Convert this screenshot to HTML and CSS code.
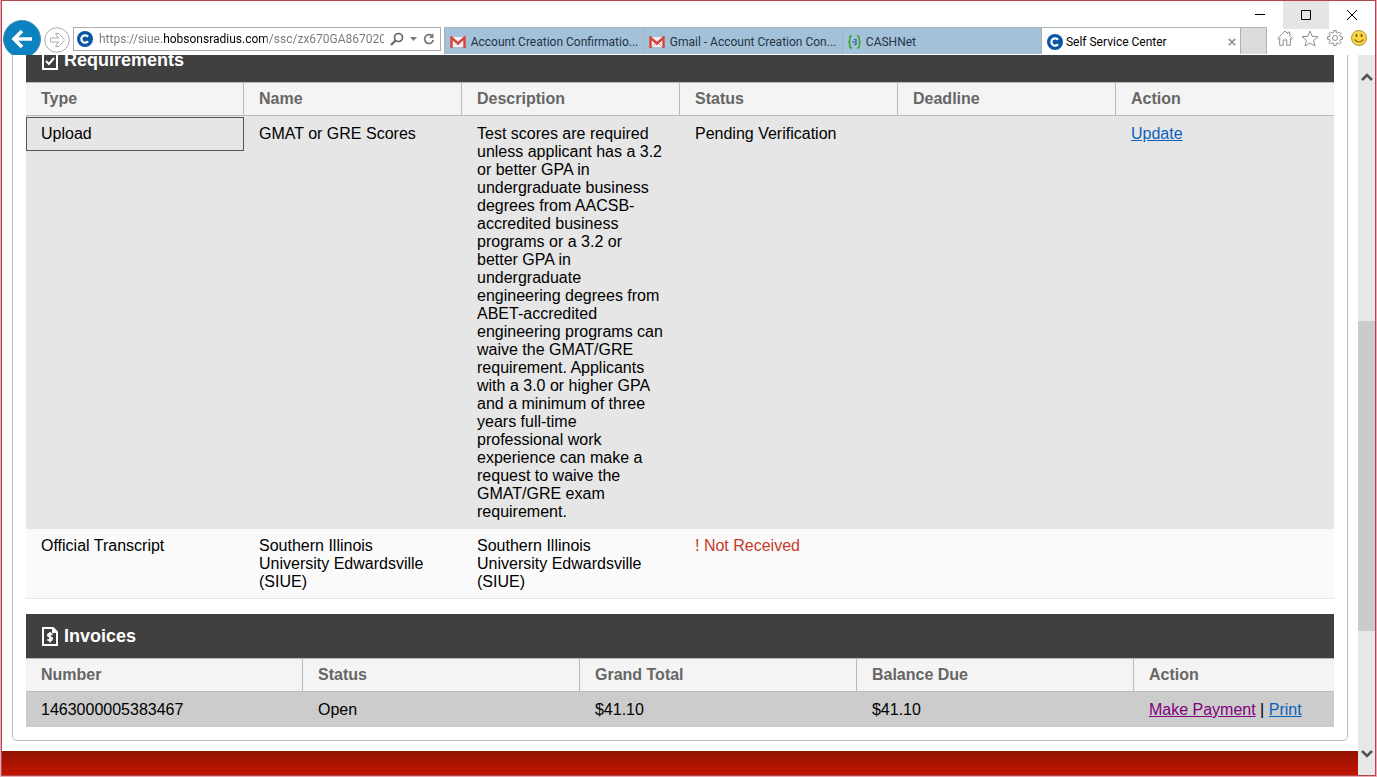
FILE: index.html
```html
<!DOCTYPE html>
<html lang="en">
<head>
<meta charset="utf-8">
<title>Self Service Center</title>
<link rel="stylesheet" href="styles.css">
</head>
<body>
<div class="window">
  <header class="chrome">
    <div class="titlebar">
      <button class="win-btn" aria-label="Minimize"><svg width="12" height="12" viewBox="0 0 12 12"><path d="M1 5.500h10" stroke="#000"/></svg></button>
      <button class="win-btn hovered" aria-label="Maximize"><svg width="12" height="12" viewBox="0 0 12 12"><path d="M1.500 1.500h9v9h-9z" fill="none" stroke="#000"/></svg></button>
      <button class="win-btn" aria-label="Close"><svg width="12" height="12" viewBox="0 0 12 12"><path d="M1 1l10 10M11 1L1 11" stroke="#000"/></svg></button>
    </div>
    <div class="toolbar">
      <button class="back" aria-label="Back"><svg width="24" height="22" viewBox="0 0 24 22"><path d="M22 11H4M12 3L4 11l8 8" fill="none" stroke="#fff" stroke-width="3.600"/></svg></button>
      <button class="forward" aria-label="Forward"><svg width="26" height="26" viewBox="0 0 26 26"><circle cx="13" cy="13" r="12.300" fill="#fff" stroke="#aaa"/><path d="M6.500 11h8l-3-4.500h3.500L20.500 13 15 19.500h-3.500l3-4.500h-8z" fill="#fff" stroke="#aaa"/></svg></button>
      <div class="address">
        <svg width="16" height="16" viewBox="0 0 16 16"><circle cx="8" cy="8" r="8" fill="#0b56a4"/><path d="M11 5.700A3.700 3.700 0 1 0 11 10.300" fill="none" stroke="#fff" stroke-width="2.200"/></svg>
        <input class="url" type="text" aria-label="Address" value="https://siue.hobsonsradius.com/ssc/zx670GA867020x67">
        <button class="bare" aria-label="Search"><svg width="14" height="14" viewBox="0 0 14 14"><circle cx="8.500" cy="5.500" r="4" fill="none" stroke="#666" stroke-width="1.700"/><path d="M5.500 8.500L1 13" stroke="#666" stroke-width="2.300"/></svg></button>
        <button class="bare" aria-label="Show history"><svg width="7" height="4" viewBox="0 0 7 4"><path d="M0 0h7L3.500 4z" fill="#777"/></svg></button>
        <button class="bare" aria-label="Refresh"><svg width="12" height="14" viewBox="0 0 12 14"><path d="M9 3.800A4.400 4.400 0 1 0 10.300 8" fill="none" stroke="#777" stroke-width="1.800"/><path d="M10.500 1v5H6z" fill="#777"/></svg></button>
      </div>
      <nav class="tabs">
        <button class="tab"><svg width="16" height="12" viewBox="0 0 16 12"><path d="M1 1h14v10H1z" fill="#f6efef"/><path d="M3 11l5-5 5 5" fill="none" stroke="#ddd"/><path d="M1.500 12V1.500L8 7.500l6.500-6V12" fill="none" stroke="#d5453d" stroke-width="2.400"/></svg><span>Account Creation Confirmatio...</span></button>
        <button class="tab"><svg width="16" height="12" viewBox="0 0 16 12"><path d="M1 1h14v10H1z" fill="#f6efef"/><path d="M3 11l5-5 5 5" fill="none" stroke="#e6a5a5"/><path d="M1.500 12V1.500L8 7.500l6.500-6V12" fill="none" stroke="#d5453d" stroke-width="2.400"/></svg><span>Gmail - Account Creation Con...</span></button>
        <button class="tab"><svg width="13" height="14" viewBox="0 0 13 14"><path d="M4 1.200H3Q1.800 1.200 1.800 3v2.500L.8 7l1 1.500V11q0 1.800 1.200 1.800h1M9 1.200h1q1.200 0 1.200 1.800v2.500l1 1.500-1 1.500V11q0 1.800-1.200 1.800H9" fill="none" stroke="#3eaa3a" stroke-width="1.700"/><path d="M4 7h3.500M6 4.500h2v5H6" fill="none" stroke="#35629b" stroke-width="1.200"/></svg><span>CASHNet</span></button>
        <button class="tab tab-active"><svg width="16" height="16" viewBox="0 0 16 16"><circle cx="8" cy="8" r="8" fill="#0b56a4"/><path d="M11 5.700A3.700 3.700 0 1 0 11 10.300" fill="none" stroke="#fff" stroke-width="2.200"/></svg><span>Self Service Center</span><svg class="tab-close" width="8" height="8" viewBox="0 0 8 8"><path d="M.8.8l6.400 6.400M7.200.8L.8 7.200" stroke="#999" stroke-width="1.900"/></svg></button>
        <button class="new-tab" aria-label="New tab"></button>
      </nav>
      <div class="tools">
        <button class="bare" aria-label="Home"><svg width="16" height="16" viewBox="0 0 16 16"><path d="M.7 8.500L8 1l2.800 2.800V2.200h2v3.600l2.500 2.700-1 1-1-1v6.800H9.800V10H6.200v5.300H2.700V8.500l-1 1z" fill="#fff" stroke="#8c8c8c"/></svg></button>
        <button class="bare" aria-label="Favorites"><svg width="18" height="17" viewBox="0 0 18 17"><path d="M9 1l2.200 5.300 5.800.4-4.400 3.800 1.400 5.500L9 13l-5 3 1.400-5.500L1 6.700l5.800-.4z" fill="#fff" stroke="#8c8c8c"/></svg></button>
        <button class="bare" aria-label="Tools"><svg width="16" height="16" viewBox="0 0 16 16"><path d="M6.700.6h2.600v2l1.600.7 1.400-1.400 1.800 1.800-1.400 1.400.7 1.600h2v2.600h-2l-.7 1.600 1.400 1.400-1.800 1.800-1.400-1.400-1.600.7v2H6.700v-2l-1.600-.7-1.400 1.400-1.800-1.800 1.400-1.400-.7-1.600h-2V6.700h2l.7-1.600L1.900 3.700l1.800-1.800 1.400 1.400 1.600-.7z" fill="#fff" stroke="#8c8c8c"/><circle cx="8" cy="8" r="2.500" fill="#fff" stroke="#8c8c8c"/></svg></button>
        <button class="bare" aria-label="Send a smile"><svg width="16" height="16" viewBox="0 0 16 16"><circle cx="8" cy="8" r="7.500" fill="#fbd63f" stroke="#a89450"/><path d="M5.500 4v3M10.500 4v3" stroke="#76601c" stroke-width="1.700"/><path d="M3.500 9.500q4.500 5 9 0" fill="none" stroke="#8b701b" stroke-width="1.200"/></svg></button>
      </div>
    </div>
  </header>

  <div class="viewport">
    <main class="page">
      <div class="card">
        <section class="panel">
          <h2 class="panel-title"><svg width="16" height="19" viewBox="0 0 16 19"><path d="M1 2h14v16H1z" fill="none" stroke="#fff" stroke-width="2"/><path d="M4 10l3 3 5-6" fill="none" stroke="#fff" stroke-width="2"/></svg>Requirements</h2>
          <table class="grid">
            <thead><tr><th>Type</th><th>Name</th><th>Description</th><th>Status</th><th>Deadline</th><th>Action</th></tr></thead>
            <tbody>
              <tr class="row-shaded">
                <td><div class="focused">Upload</div></td>
                <td>GMAT or GRE Scores</td>
                <td>Test scores are required unless applicant has a 3.2 or better GPA in undergraduate business degrees from AACSB-accredited business programs or a 3.2 or better GPA in undergraduate engineering degrees from ABET-accredited engineering programs can waive the GMAT/GRE requirement. Applicants with a 3.0 or higher GPA and a minimum of three years full-time professional work experience can make a request to waive the GMAT/GRE exam requirement.</td>
                <td>Pending Verification</td>
                <td></td>
                <td><a href="#update">Update</a></td>
              </tr>
              <tr class="row-light">
                <td>Official Transcript</td>
                <td>Southern Illinois University Edwardsville (SIUE)</td>
                <td>Southern Illinois University Edwardsville (SIUE)</td>
                <td class="missing">! Not Received</td>
                <td></td>
                <td></td>
              </tr>
            </tbody>
          </table>
        </section>
        <section class="panel">
          <h2 class="panel-title"><svg width="16" height="19" viewBox="0 0 16 19"><path d="M1 1h10l4 4v13H1z" fill="none" stroke="#fff" stroke-width="2"/><path d="M10 1v5h5z" fill="#fff"/><path d="M10.500 7.600Q8 6 6.200 7.200 4.800 9 8 9.800q3.200 1 1.800 3Q8 14.200 5.300 12.600M8 5v10.500" fill="none" stroke="#fff" stroke-width="1.700"/></svg>Invoices</h2>
          <table class="grid">
            <colgroup><col class="wide"><col class="wide"><col class="wide"><col class="wide"><col></colgroup>
            <thead><tr><th>Number</th><th>Status</th><th>Grand Total</th><th>Balance Due</th><th>Action</th></tr></thead>
            <tbody>
              <tr class="row-selected"><td>1463000005383467</td><td>Open</td><td>$41.10</td><td>$41.10</td><td><a class="visited" href="#pay">Make Payment</a> | <a href="#print">Print</a></td></tr>
            </tbody>
          </table>
        </section>
      </div>
      <footer class="page-footer"></footer>
    </main>
    <div class="scrollbar">
      <button class="scroll-btn" aria-label="Scroll up"><svg width="12" height="10" viewBox="0 0 12 10"><path d="M1 8l5-5 5 5" fill="none" stroke="#555" stroke-width="2.600"/></svg></button>
      <div class="track"><div class="thumb"></div></div>
      <button class="scroll-btn" aria-label="Scroll down"><svg width="12" height="10" viewBox="0 0 12 10"><path d="M1 2l5 5 5-5" fill="none" stroke="#555" stroke-width="2.600"/></svg></button>
    </div>
  </div>
</div>
</body>
</html>
```
FILE: styles.css
```css
* { box-sizing: border-box; }

body {
  margin: 0;
  padding: 0 1px 1px;
  height: 100vh;
  overflow: hidden;
  background: #f0a9b0;
  color: #000;
  font: 16px/18px "Liberation Sans", Arial, sans-serif;
}

button {
  margin: 0;
  padding: 0;
  border: 0;
  background: none;
  font: inherit;
  color: inherit;
}

svg { display: block; flex: none; }

.window {
  display: flex;
  flex-direction: column;
  height: 100%;
  border: 1px solid #b04450;
  background: #fff;
}

/* Browser chrome */
.chrome {
  flex: none;
  height: 54px;
  overflow: hidden;
  font: 12px/16px Roboto, "Open Sans", sans-serif;
}

.titlebar {
  display: flex;
  justify-content: flex-end;
  height: 26px;
}

.win-btn {
  display: flex;
  align-items: center;
  justify-content: center;
  width: 46px;
  height: 28px;
}

.win-btn.hovered { background: #e5e5e5; }

.toolbar {
  display: flex;
  align-items: flex-start;
  height: 28px;
}

.back {
  display: flex;
  align-items: center;
  justify-content: center;
  flex: none;
  width: 38px;
  height: 38px;
  margin: -7px 3px 0 1px;
  border: 1px solid #4b8fb5;
  border-radius: 50%;
  background: #0c83c1;
}

.forward { margin-right: 3px; }

.address {
  display: flex;
  align-items: center;
  gap: 6px;
  flex: 358 1 0;
  min-width: 0;
  height: 24px;
  padding: 0 5px 0 3px;
  border: 1px solid #adadad;
}

.url {
  flex: 1;
  min-width: 0;
  height: 20px;
  padding: 0;
  border: 0;
  outline: 0;
  font: inherit;
  color: transparent;
  background: linear-gradient(to right, #777 64px, #000 64px, #000 168px, #777 168px);
  -webkit-background-clip: text;
  background-clip: text;
}

.tabs {
  display: flex;
  flex: 824 1 0;
  min-width: 0;
  height: 27px;
  margin-left: 3px;
}

.tab {
  display: flex;
  align-items: center;
  gap: 5px;
  flex: 189 1 0;
  min-width: 0;
  padding: 1px 4px 0 5px;
  border: 1px solid #aab2b8;
  border-width: 1px 0 0 1px;
  background: #a4c1da;
  color: #24333f;
  text-align: left;
  white-space: nowrap;
}

.tab-active {
  gap: 3px;
  background: #fff;
  color: #000;
}

.tab-close { margin-left: auto; }

.new-tab {
  flex: 25 1 0;
  border: 1px solid #b0b0b0;
  border-bottom: 0;
  background: #dcdcdc;
}

.tools {
  display: flex;
  align-items: center;
  gap: 8px;
  height: 22px;
  padding: 0 8px 0 10px;
}

/* Page area */
.viewport {
  display: flex;
  flex: 1;
  min-height: 0;
}

.page {
  display: flex;
  flex-direction: column;
  flex: 1;
  min-width: 0;
  overflow: hidden;
}

.card {
  flex: none;
  margin: -18px 10px 10px;
  padding: 0 13px 13px;
  border: 1px solid #bbb;
  border-radius: 5px;
}

.panel + .panel { margin-top: 15px; }

.panel-title {
  display: flex;
  align-items: center;
  gap: 6px;
  height: 44px;
  margin: 0;
  padding: 0 16px;
  background: #404040;
  color: #fff;
  font-size: 18px;
  line-height: 22px;
}

.grid {
  width: 100%;
  table-layout: fixed;
  border-collapse: separate;
  border-spacing: 0;
}

.grid th {
  padding: 7px 15px;
  border: 1px solid #bbb;
  border-width: 1px 1px 1px 0;
  background: #f4f4f4;
  color: #666;
  text-align: left;
}

.grid th:last-child { border-right: 0; }

.grid td {
  padding: 9px 15px 8px;
  vertical-align: top;
}

.wide { width: 21.177%; }

.row-shaded { background: #e6e6e6; }
.row-light { background: #fafafa; }
.row-selected { background: #ccc; }

.grid .row-light td {
  padding: 8px 15px 7px;
  border-bottom: 1px solid #e6e6e6;
}

.focused {
  margin: -8px -15px;
  padding: 7px 14px;
  border: 1px solid #555;
}

.missing { color: #c43b2a; }

a { color: #0b62bd; }
a.visited { color: #800080; }

.page-footer {
  flex: 1 0 24px;
  background: linear-gradient(#8f1300, #c41500);
}

.scrollbar {
  display: flex;
  flex-direction: column;
  flex: none;
  width: 17px;
  background: #e8e8e8;
}

.scroll-btn {
  display: flex;
  align-items: center;
  justify-content: center;
  height: 43px;
}

.track {
  display: flex;
  flex-direction: column;
  flex: 1;
}

.track::before { content: ""; flex: 223; }
.track::after { content: ""; flex: 101; }

.thumb {
  flex: 310;
  background: #cbcbcb;
}
```
